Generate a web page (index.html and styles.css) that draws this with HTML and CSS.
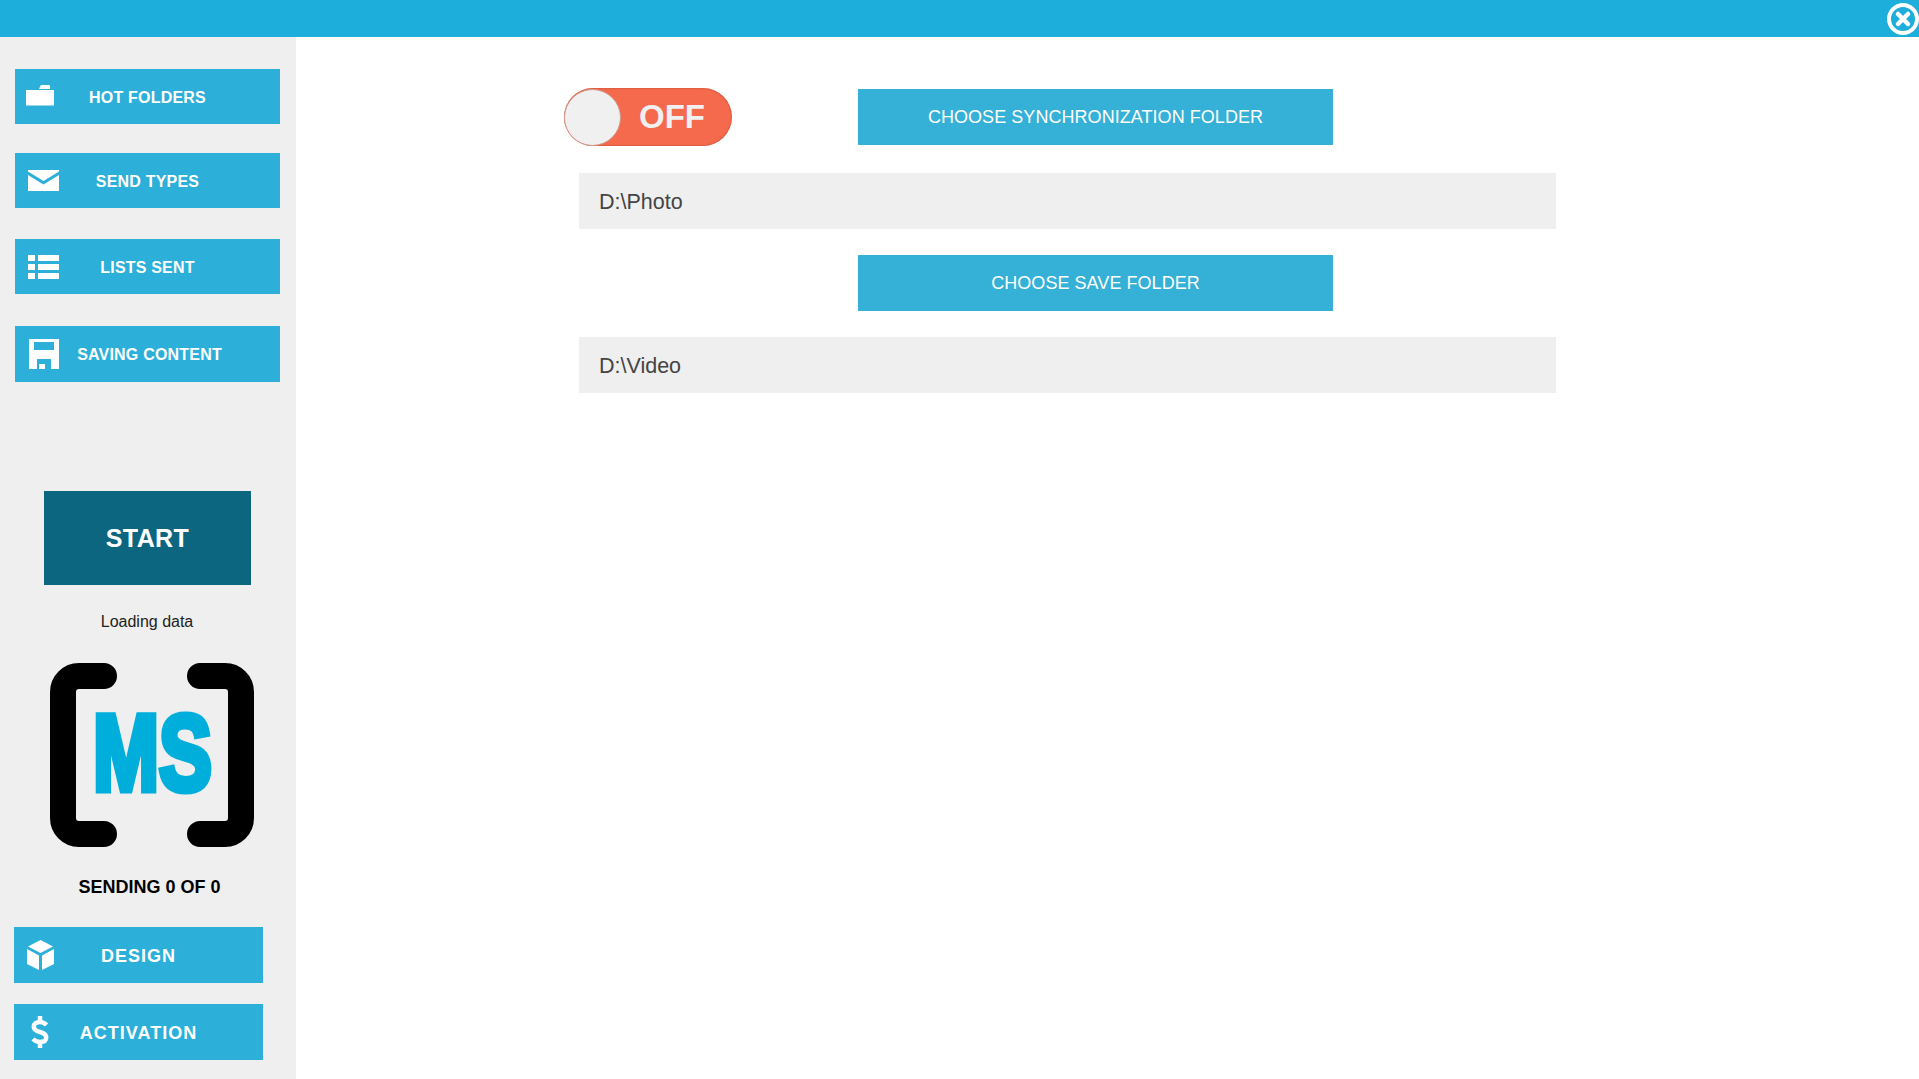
FILE: index.html
```html
<!DOCTYPE html>
<html lang="en">
<head>
    <meta charset="UTF-8">
    <meta name="viewport" content="width=device-width, initial-scale=1.0">
    <title>MS Sender</title>
    <link rel="stylesheet" href="styles.css">
</head>
<body>
    <!-- Top bar -->
    <header class="topbar">
        <svg class="close-icon" viewBox="0 0 32 32">
            <circle cx="16" cy="16" r="14" fill="none" stroke="#fff" stroke-width="4"/>
            <path d="M11 11l10 10M21 11L11 21" stroke="#fff" stroke-width="4.5" stroke-linecap="round"/>
        </svg>
    </header>

    <div class="layout">
        <!-- Sidebar -->
        <aside class="sidebar">
            <nav class="side-nav">
                <div class="side-btn">
                    <svg class="icon icon-folder" viewBox="0 0 28 21"><path fill="#fff" d="M0 5h28v15.500H0zM13 4l1.500-3.500Q15 0 16 0h7q1 0 1 1v3z"/></svg>
                    <span class="side-label">HOT FOLDERS</span>
                </div>
                <div class="side-btn">
                    <svg class="icon icon-mail" viewBox="0 0 31 21"><path fill="#fff" d="M0 0h31v1.500L15.500 11 0 1.500zM0 5l15.500 9.500L31 5v16H0z"/></svg>
                    <span class="side-label">SEND TYPES</span>
                </div>
                <div class="side-btn">
                    <svg class="icon icon-list" viewBox="0 0 31 24"><path fill="#fff" d="M0 0h7v6H0zM10 0h21v6H10zM0 9h7v6H0zM10 9h21v6H10zM0 18h7v6H0zM10 18h21v6H10z"/></svg>
                    <span class="side-label">LISTS SENT</span>
                </div>
                <div class="side-btn side-btn-tall">
                    <svg class="icon icon-save" viewBox="0 0 30 30"><path fill="#fff" fill-rule="evenodd" d="M0 0h30v30H0zM5 3v8h20V3zM8 20v10h14V20zM10 25h6v5h-6z"/></svg>
                    <span class="side-label">SAVING CONTENT</span>
                </div>
            </nav>

            <div class="start-btn">START</div>
            <p class="loading">Loading data</p>

            <svg class="logo" viewBox="0 0 204 184">
                <path class="logo-bracket" d="M54 13H29A16 16 0 0 0 13 29V155A16 16 0 0 0 29 171H54"/>
                <path class="logo-bracket" d="M150 13H175A16 16 0 0 1 191 29V155A16 16 0 0 1 175 171H150"/>
                <text class="logo-text" x="43" y="127" textLength="119" lengthAdjust="spacingAndGlyphs">MS</text>
            </svg>

            <p class="sending">SENDING 0 OF 0</p>

            <div class="side-btn side-btn-low">
                <svg class="icon icon-cube" viewBox="0 0 27 30"><path fill="#fff" d="M13.500 0L26 6.500 13.500 13 1 6.500zM0 9l12 6.500V30L0 24zM27 9l-12 6.500V30l12-6z"/></svg>
                <span class="side-label">DESIGN</span>
            </div>
            <div class="side-btn side-btn-low">
                <svg class="icon icon-dollar" viewBox="0 0 18 32"><path fill="none" stroke="#fff" stroke-width="4.500" d="M15.500 9C13 6.500 11 6 9 6 5 6 2.800 8 2.800 10.700 2.800 13.500 5 15 9 16c4 1 6.200 2.500 6.200 5.500 0 2.800-2.200 4.500-6.200 4.500-2.500 0-5-1-7-3M9 0v6M9 26v6"/></svg>
                <span class="side-label">ACTIVATION</span>
            </div>
        </aside>

        <!-- Folders -->
        <main class="content">
            <div class="folder-row">
                <div class="toggle">
                    <div class="toggle-knob"></div>
                    <span>OFF</span>
                </div>
                <div class="choose-btn">CHOOSE SYNCHRONIZATION FOLDER</div>
            </div>
            <div class="path-box">D:\Photo</div>
            <div class="choose-btn choose-btn-save">CHOOSE SAVE FOLDER</div>
            <div class="path-box">D:\Video</div>
        </main>
    </div>
</body>
</html>
```

FILE: styles.css
```css
/* Global Styles */
* {
    margin: 0;
    padding: 0;
    box-sizing: border-box;
}

body {
    font-family: "Liberation Sans", Arial, sans-serif;
    background-color: #fff;
    color: #000;
}

/* Top bar */
.topbar {
    display: flex;
    justify-content: flex-end;
    height: 37px;
    background-color: #1eaedb;
}

.close-icon {
    width: 32px;
    height: 32px;
    margin-top: 3px;
    flex-shrink: 0;
}

.layout {
    display: flex;
    height: 1042px;
}

/* Sidebar */
.sidebar {
    width: 296px;
    padding-top: 32px;
    background-color: #efefef;
}

.side-nav {
    display: flex;
    flex-direction: column;
}

.side-btn {
    display: grid;
    align-items: center;
    justify-items: center;
    width: 265px;
    height: 55px;
    margin-left: 15px;
    background-color: #2cafd8;
    color: #fff;
    font-size: 16px;
    font-weight: bold;
    letter-spacing: 0.2px;
}

.side-btn > * {
    grid-area: 1 / 1;
}

.side-label {
    padding-top: 2px;
}

.side-btn:nth-child(2) {
    margin-top: 29px;
}

.side-btn:nth-child(3) {
    margin-top: 31px;
}

.side-btn-tall {
    height: 56px;
    margin-top: 32px;
}

.side-btn-tall .side-label {
    padding-left: 4px;
}

.side-btn-low {
    width: 249px;
    height: 56px;
    margin-left: 14px;
    font-size: 18px;
    letter-spacing: 1px;
}

.side-btn-low + .side-btn-low {
    margin-top: 21px;
}

.icon {
    justify-self: start;
}

.icon-folder {
    width: 28px;
    height: 21px;
    margin: -2px 0 0 11px;
}

.icon-mail {
    width: 31px;
    height: 21px;
    margin-left: 13px;
}

.icon-list {
    width: 31px;
    height: 24px;
    margin: 1px 0 0 13px;
}

.icon-save {
    width: 30px;
    height: 30px;
    margin-left: 14px;
}

.icon-cube {
    width: 27px;
    height: 30px;
    margin-left: 13px;
}

.icon-dollar {
    width: 18px;
    height: 32px;
    margin: -1px 0 0 17px;
}

.start-btn {
    display: flex;
    align-items: center;
    justify-content: center;
    width: 207px;
    height: 94px;
    margin: 109px 0 0 44px;
    background-color: #0d6680;
    color: #fff;
    font-size: 25px;
    font-weight: bold;
    letter-spacing: 0.4px;
}

.loading {
    margin-top: 27px;
    padding-right: 2px;
    text-align: center;
    font-size: 16px;
    line-height: 20px;
    color: #222;
}

.logo {
    display: block;
    width: 204px;
    height: 184px;
    margin: 31px 0 0 50px;
}

.logo-bracket {
    fill: none;
    stroke: #000;
    stroke-width: 26;
    stroke-linecap: round;
}

.logo-text {
    font-size: 108px;
    font-weight: bold;
    fill: #00aedb;
    stroke: #00aedb;
    stroke-width: 7;
}

.sending {
    height: 51px;
    margin-top: 29px;
    padding-left: 3px;
    text-align: center;
    font-size: 18px;
    line-height: 22px;
    font-weight: bold;
}

/* Folders */
.content {
    flex: 1;
    padding: 52px 0 0 283px;
}

.folder-row {
    display: flex;
    align-items: center;
    gap: 126px;
    margin-left: -15px;
}

.toggle {
    display: flex;
    align-items: center;
    gap: 18px;
    width: 168px;
    height: 58px;
    margin: -1px 0;
    border-radius: 29px;
    background-color: #f5694c;
    box-shadow: inset 0 0 2px rgba(120, 40, 20, 0.6);
    color: #f0f0f0;
    font-size: 33px;
    font-weight: bold;
}

.toggle-knob {
    width: 57px;
    height: 57px;
    border-radius: 50%;
    background-color: #f0f0f0;
    border: 1px solid #d29a8d;
}

.choose-btn {
    display: flex;
    align-items: center;
    justify-content: center;
    width: 475px;
    height: 56px;
    background-color: #35b0d6;
    color: #fff;
    font-size: 18px;
    letter-spacing: 0.05px;
}

.choose-btn-save {
    margin: 26px 0 26px 279px;
}

.path-box {
    display: flex;
    align-items: center;
    width: 977px;
    height: 56px;
    margin-top: 28px;
    padding: 2px 0 0 20px;
    background-color: #efefef;
    color: #444;
    font-size: 21.5px;
}

.choose-btn-save + .path-box {
    margin-top: 0;
}
```
